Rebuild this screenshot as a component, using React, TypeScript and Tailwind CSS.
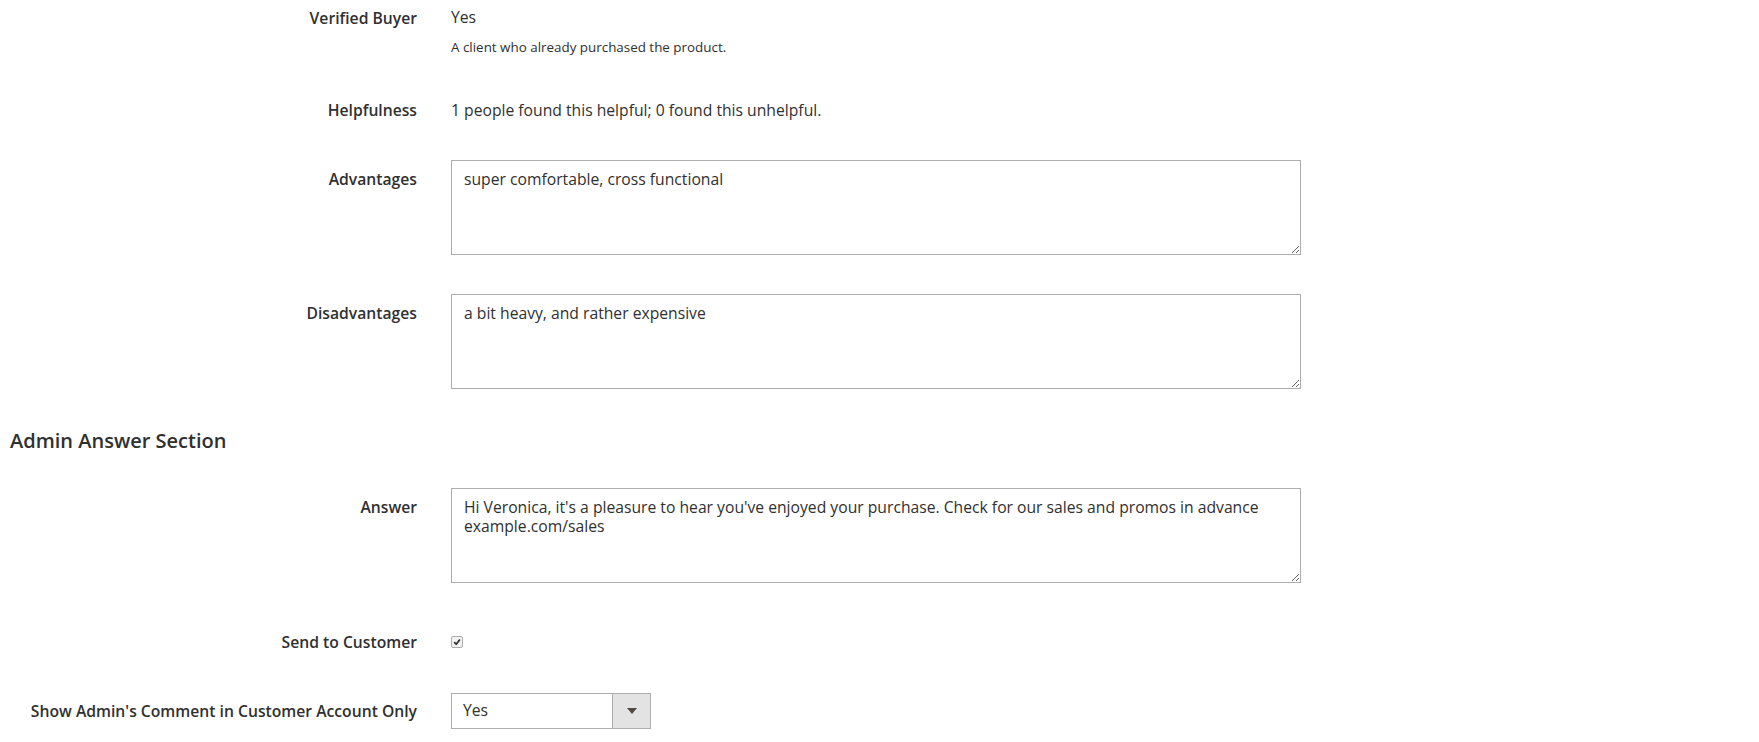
const FONT = "font-['Open_Sans','Noto_Sans',sans-serif]";

function Label({ children, className = "" }: { children: React.ReactNode; className?: string }) {
  return (
    <div className={`w-[417px] shrink-0 text-right text-[15.7px] leading-[22px] font-semibold text-[#303030] ${className}`}>
      {children}
    </div>
  );
}

function Area({ value }: { value: string }) {
  return (
    <textarea
      readOnly
      defaultValue={value}
      className="block w-[850px] h-[95px] border border-[#adadad] bg-white px-[12px] pt-[9px] text-[15.7px] leading-[19px] text-[#303030] resize-y outline-none"
    />
  );
}

function Check() {
  return (
    <span className="flex h-[12px] w-[12px] items-center justify-center rounded-[2px] border border-[#adadad] bg-[#f2f2f2]">
      <svg viewBox="0 0 10 10" className="h-[8px] w-[8px]">
        <path d="M1.5 5.2 L4 7.8 L8.6 1.8" fill="none" stroke="#303030" strokeWidth="2.2" strokeLinejoin="round" />
      </svg>
    </span>
  );
}

export default function App() {
  return (
    <div className={`${FONT} min-h-[742px] w-[1759px] bg-white pt-[7px] text-[#303030]`}>
      {/* Verified Buyer */}
      <div className="flex gap-[34px]">
        <Label>Verified Buyer</Label>
        <div>
          <div className="text-[15.7px] leading-[20px]">Yes</div>
          <div className="mt-[11px] text-[13.4px] leading-[19px]">A client who already purchased the product.</div>
        </div>
      </div>

      {/* Helpfulness */}
      <div className="mt-[42px] flex gap-[34px]">
        <Label>Helpfulness</Label>
        <div className="text-[15.7px] leading-[22px]">1 people found this helpful; 0 found this unhelpful.</div>
      </div>

      <div className="mt-[39px] flex gap-[34px]">
        <Label className="pt-[8px]">Advantages</Label>
        <Area value="super comfortable, cross functional" />
      </div>

      <div className="mt-[39px] flex gap-[34px]">
        <Label className="pt-[8px]">Disadvantages</Label>
        <Area value="a bit heavy, and rather expensive" />
      </div>

      <h2 className="mt-[37px] pl-[10px] text-[20px] leading-[30px] font-semibold text-[#303030]">Admin Answer Section</h2>

      <div className="mt-[32px] flex gap-[34px]">
        <Label className="pt-[8px]">Answer</Label>
        <Area value="Hi Veronica, it's a pleasure to hear you've enjoyed your purchase. Check for our sales and promos in advance example.com/sales" />
      </div>

      <div className="mt-[48px] flex items-center gap-[34px]">
        <Label>Send to Customer</Label>
        <Check />
      </div>

      <div className="mt-[40px] flex items-center gap-[34px]">
        <Label>Show Admin's Comment in Customer Account Only</Label>
        <div className="flex h-[36px] w-[200px] border border-[#adadad] bg-white">
          <div className="flex flex-1 items-center pl-[11px] text-[15.7px]">Yes</div>
          <div className="flex w-[38px] items-center justify-center border-l border-[#adadad] bg-[#e3e3e3]">
            <svg viewBox="0 0 10 6" className="h-[6px] w-[10px]">
              <path d="M0 0 H10 L5 6 Z" fill="#514943" />
            </svg>
          </div>
        </div>
      </div>
    </div>
  );
}
